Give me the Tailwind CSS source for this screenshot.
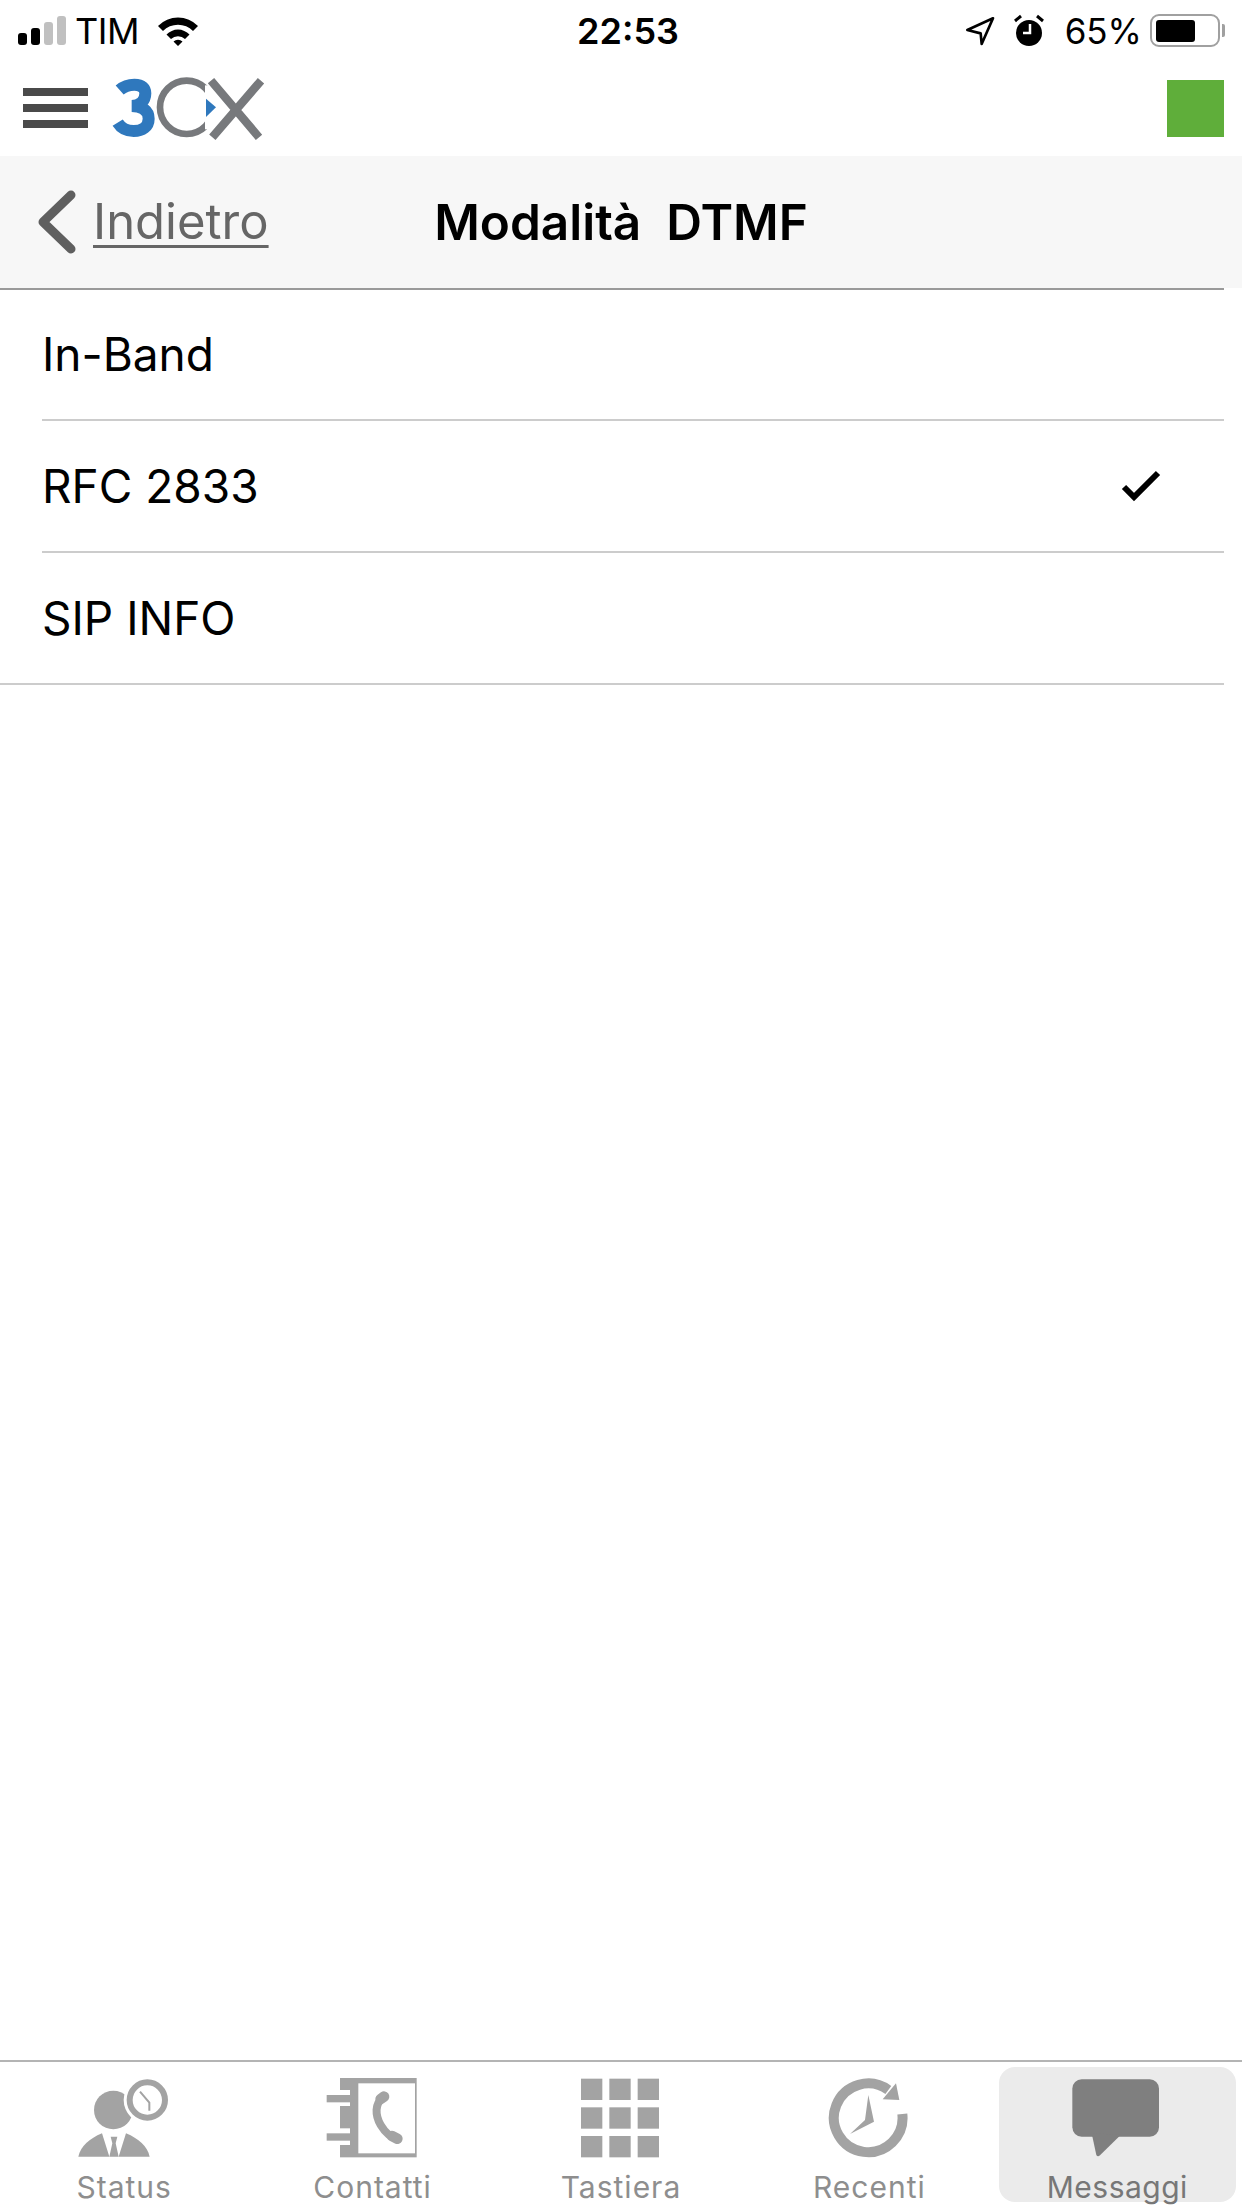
<!DOCTYPE html>
<html lang="it">
<head>
    <meta charset="UTF-8">
    <meta name="viewport" content="width=device-width, initial-scale=1">
    <title>Modalità DTMF</title>
    <script src="https://cdn.jsdelivr.net/npm/@tailwindcss/browser@4"></script>
</head>
<body class="bg-white font-['Inter',sans-serif] text-black">
    <div class="flex flex-col w-[1242px] h-[2208px] overflow-hidden">

        <!-- status bar -->
        <div class="grid grid-cols-[1fr_auto_1fr] items-center h-[69px] pb-[8px] shrink-0 text-[36px] leading-[40px]">
            <div class="flex items-center pl-[18px]">
                <div class="flex items-end gap-[4px] h-[29px]">
                    <div class="w-[9px] h-[12px] rounded-[3px] bg-black"></div>
                    <div class="w-[9px] h-[17px] rounded-[3px] bg-black"></div>
                    <div class="w-[9px] h-[23px] rounded-[3px] bg-[#c0c0c0]"></div>
                    <div class="w-[9px] h-[29px] rounded-[3px] bg-[#c0c0c0]"></div>
                </div>
                <span class="ml-[9px] tracking-[-0.5px]">TIM</span>
                <svg class="ml-[18px]" width="42" height="30" viewBox="0 0 42 30"><path d="M1 10A28 28 0 0 1 41 10L36 15A21 21 0 0 0 6 15Z M9.5 18.5A16 16 0 0 1 32.5 18.5L28 23A10 10 0 0 0 14 23Z M16.5 25.5A7 7 0 0 1 25.5 25.5L21 30Z"/></svg>
            </div>
            <span class="font-semibold ml-[14px]">22:53</span>
            <div class="flex items-center justify-end pr-[22px]">
                <svg width="32" height="32" viewBox="15 25 96 96"><path d="M102 35L25 70L65 80L68 112Z" fill="none" stroke="#000" stroke-width="8" stroke-linejoin="round"/></svg>
                <svg class="ml-[16px]" width="34" height="34" viewBox="0 0 34 34"><circle cx="17" cy="19" r="13"/><path d="M3 7L9 2M31 7L25 2" stroke="#000" stroke-width="3"/><path d="M18 10V19H11" fill="none" stroke="#fff" stroke-width="2.5"/></svg>
                <span class="ml-[19px] text-[35px]">65%</span>
                <div class="relative flex items-center ml-[8px] w-[70px] h-[33px] p-[4px] rounded-[9px] border-2 border-[#a0a0a0]">
                    <div class="w-[39px] h-[22px] rounded-[3px] bg-black"></div>
                    <div class="absolute -right-[7px] top-[8px] w-[3px] h-[13px] rounded-r-[2px] bg-[#a0a0a0]"></div>
                </div>
            </div>
        </div>

        <!-- app header -->
        <div class="flex items-center h-[87px] pb-[9px] pl-[23px] pr-[18px] shrink-0">
            <div class="flex flex-col gap-[8px] w-[65px]">
                <div class="h-[8px] bg-[#4a4a4a]"></div>
                <div class="h-[8px] bg-[#4a4a4a]"></div>
                <div class="h-[8px] bg-[#4a4a4a]"></div>
            </div>
            <svg class="ml-[17px]" width="170" height="72" viewBox="0 0 510 216">
                <circle cx="245" cy="106" r="80" fill="none" stroke="#77797c" stroke-width="20"/>
                <rect x="300" y="40" width="50" height="132" fill="#fff"/>
                <path d="M303 80L333 106L303 135Z" fill="#2f78bd"/>
                <path d="M318 26L462 196M468 26L322 196" fill="none" stroke="#77797c" stroke-width="25"/>
                <path d="M44 54Q62 38 88 38C112 38 121 50 121 64C121 88 104 102 80 102C112 102 131 116 131 140C131 164 112 177 86 177C64 177 48 168 38 152" fill="none" stroke="#2f78bd" stroke-width="36"/>
            </svg>
            <div class="ml-auto w-[57px] h-[57px] bg-[#5fae3a]"></div>
        </div>

        <!-- nav title -->
        <div class="grid grid-cols-[1fr_auto_1fr] items-center h-[132px] bg-[#f7f7f7] shrink-0">
            <a class="flex items-center pl-[38px]">
                <svg width="38" height="64" viewBox="0 0 38 64"><path d="M33 5L5 32L33 59" fill="none" stroke="#5f5f5f" stroke-width="9" stroke-linecap="round" stroke-linejoin="round"/></svg>
                <span class="ml-[17px] text-[49px] leading-[56px] text-[#666666] underline underline-offset-[6px] decoration-[3px]">Indietro</span>
            </a>
            <span class="text-[49.5px] leading-[56px] font-semibold whitespace-pre">Modalità  DTMF</span>
            <div></div>
        </div>
        <div class="h-[2px] mr-[18px] bg-[#9a9a9a] shrink-0"></div>

        <!-- options -->
        <div class="flex-1 mr-[18px] text-[46px]">
            <div class="flex items-center ml-[42px] h-[131px] border-b-2 border-[#cccccc]">In-Band</div>
            <div class="flex items-center justify-between ml-[42px] h-[132px] border-b-2 border-[#cccccc]">
                <span>RFC 2833</span>
                <svg class="mr-[63px]" width="40" height="32" viewBox="0 0 40 32"><path d="M3 17L13 27L37 3" fill="none" stroke="#000" stroke-width="6"/></svg>
            </div>
            <div class="flex items-center pl-[42px] h-[132px] border-b-2 border-[#cccccc]">SIP INFO</div>
        </div>

        <!-- tab bar -->
        <div class="grid grid-cols-5 h-[148px] border-t-2 border-[#b4b4b4] shrink-0 text-[30px] leading-[28px] tracking-[1px] text-[#8e8e8e]">
            <div class="flex flex-col items-center mt-[5px] h-[135px] pt-[11px]">
                <svg width="120" height="84" viewBox="192 114 360 252" fill="#a3a3a3">
                    <ellipse cx="340" cy="210" rx="58" ry="58"/>
                    <circle cx="442" cy="180" r="71" fill="#fff"/>
                    <circle cx="442" cy="180" r="53" fill="none" stroke="#a3a3a3" stroke-width="18"/>
                    <path d="M420 155L448 188V212" fill="none" stroke="#a3a3a3" stroke-width="6"/>
                    <path d="M235 350C242 318 268 296 306 280L328 350Z"/>
                    <path d="M378 280C416 296 442 318 449 350L356 350Z"/>
                    <path d="M332 290H352L347 310L356 350H328L337 310Z"/>
                </svg>
                <span class="mt-[11px]">Status</span>
            </div>
            <div class="flex flex-col items-center mt-[5px] h-[135px] pt-[11px]">
                <svg width="120" height="84" viewBox="939 114 360 252" fill="#a3a3a3">
                    <rect x="1020" y="113" width="230" height="239"/>
                    <rect x="1075" y="130" width="170" height="210" fill="#fff"/>
                    <rect x="1020" y="150" width="30" height="48" fill="#fff"/>
                    <rect x="1020" y="265" width="30" height="50" fill="#fff"/>
                    <rect x="980" y="165" width="70" height="22"/>
                    <rect x="980" y="280" width="70" height="22"/>
                    <path d="M1146 176C1126 190 1124 225 1142 255C1157 280 1170 292 1190 294" fill="none" stroke="#a3a3a3" stroke-width="24" stroke-linecap="round"/>
                    <path d="M1152 170L1142 177M1176 288L1192 296" stroke="#a3a3a3" stroke-width="32" stroke-linecap="round"/>
                </svg>
                <span class="mt-[11px]">Contatti</span>
            </div>
            <div class="flex flex-col items-center mt-[5px] h-[135px] pt-[11px]">
                <svg width="120" height="84" viewBox="423 114 360 252" fill="#a3a3a3">
                    <rect x="483" y="116" width="64" height="64"/><rect x="568" y="116" width="64" height="64"/><rect x="653" y="116" width="64" height="64"/>
                    <rect x="483" y="202" width="64" height="64"/><rect x="568" y="202" width="64" height="64"/><rect x="653" y="202" width="64" height="64"/>
                    <rect x="483" y="288" width="64" height="64"/><rect x="568" y="288" width="64" height="64"/><rect x="653" y="288" width="64" height="64"/>
                </svg>
                <span class="mt-[11px]">Tastiera</span>
            </div>
            <div class="flex flex-col items-center mt-[5px] h-[135px] pt-[11px]">
                <svg width="120" height="84" viewBox="1167 114 360 252" fill="#a3a3a3">
                    <path d="M1447 222A103 103 0 1 1 1405 150" fill="none" stroke="#a3a3a3" stroke-width="30"/>
                    <path d="M1428 130L1438 180L1388 178Z"/>
                    <path d="M1345 165L1362 245L1290 282L1335 240Z"/>
                </svg>
                <span class="mt-[11px]">Recenti</span>
            </div>
            <div class="flex flex-col items-center mt-[5px] ml-[5px] mr-[6px] h-[135px] pt-[11px] rounded-[16px] bg-[#ebebeb] text-[#777777] tracking-[0.5px]">
                <svg width="120" height="84" viewBox="474 114 360 252" fill="#7f7f7f">
                    <rect x="520" y="118" width="260" height="172" rx="28"/>
                    <path d="M578 280L592 345Q596 352 603 346L665 285Z"/>
                </svg>
                <span class="mt-[11px]">Messaggi</span>
            </div>
        </div>
    </div>
</body>
</html>
